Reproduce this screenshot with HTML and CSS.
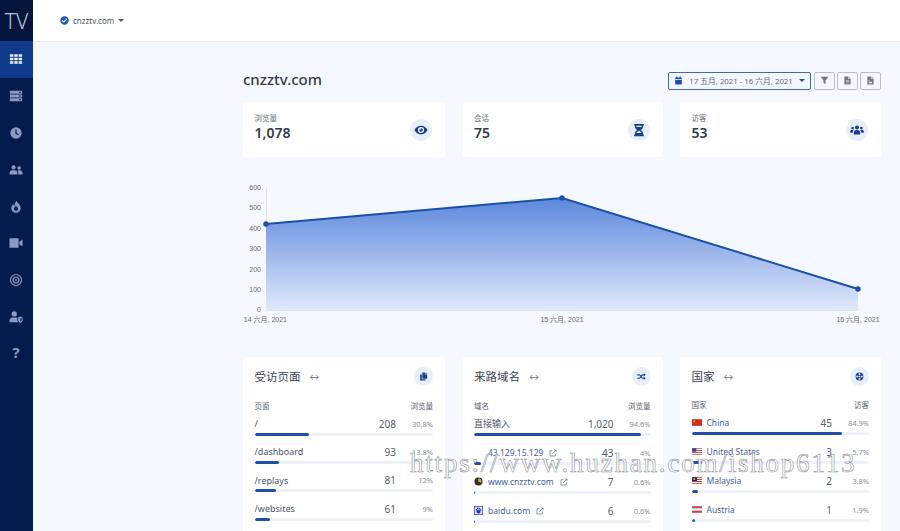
FILE: index.html
```html
<!DOCTYPE html>
<html lang="zh">
<head>
<meta charset="utf-8">
<title>cnzztv.com</title>
<link rel="stylesheet" href="styles.css">
</head>
<body>
<svg class="defs" width="0" height="0" aria-hidden="true">
  <symbol id="i-grid" viewBox="0 0 16 16"><path d="M1 2.500h4v3H1zM6 2.500h4v3H6zM11 2.500h4v3h-4zM1 6.500h4v3H1zM6 6.500h4v3H6zM11 6.500h4v3h-4zM1 10.500h4v3H1zM6 10.500h4v3H6zM11 10.500h4v3h-4z"/></symbol>
  <symbol id="i-server" viewBox="0 0 16 16"><path fill-rule="evenodd" d="M1 2h14v3.400H1zM1 6.300h14v3.400H1zM1 10.600h14V14H1zM11.500 3.200h2v1h-2zM11.500 7.500h2v1h-2zM11.500 11.800h2v1h-2z"/></symbol>
  <symbol id="i-clock" viewBox="0 0 16 16"><path fill-rule="evenodd" d="M8 1.500a6.500 6.500 0 1 1 0 13 6.500 6.500 0 0 1 0-13zM7.300 4v4.500l3 2.200.8-1-2.500-1.900V4z"/></symbol>
  <symbol id="i-users" viewBox="0 0 16 16"><circle cx="5.200" cy="5" r="2.400"/><circle cx="11.600" cy="5.600" r="2"/><path d="M.6 13.200v-1.600c0-2 1.600-3.400 3-3.400h3.200c1.400 0 2.800 1.400 2.800 3.400v1.600zM10.600 13.200v-2c0-1-.4-1.900-1-2.600.6-.3 1.200-.4 2-.4 2 0 3.800 1.200 3.800 3v2z"/></symbol>
  <symbol id="i-fire" viewBox="0 0 16 16"><path fill-rule="evenodd" d="M8.800.8c.5 2.700 4.500 4.200 4.500 8.500A5.300 5.300 0 0 1 8 14.800a5.300 5.300 0 0 1-5.300-5.500c0-2 1-3.500 2.300-4.600 0 1.300.5 2.100 1.400 2.500C6 5 7 2.600 8.800.8zM8 12.500a2.400 2.400 0 0 0 2.400-2.400C10.400 8.700 8.800 7.800 8 6.500 7.200 8 5.600 8.700 5.600 10.100A2.400 2.400 0 0 0 8 12.500z"/></symbol>
  <symbol id="i-video" viewBox="0 0 16 16"><path d="M.5 3.500A1 1 0 0 1 1.500 2.500h8.500a1 1 0 0 1 1 1v9a1 1 0 0 1-1 1H1.500a1 1 0 0 1-1-1zM11.800 6.500l3.700-2.500v8l-3.700-2.500z"/></symbol>
  <symbol id="i-target" viewBox="0 0 16 16"><path fill-rule="evenodd" d="M8 1a7 7 0 1 1 0 14A7 7 0 0 1 8 1zm0 1.400a5.600 5.600 0 1 0 0 11.200A5.600 5.600 0 0 0 8 2.400zM8 4a4 4 0 1 1 0 8 4 4 0 0 1 0-8zm0 1.400a2.600 2.600 0 1 0 0 5.200 2.600 2.600 0 0 0 0-5.200zM8 6.800a1.200 1.200 0 1 1 0 2.400 1.200 1.200 0 0 1 0-2.400z"/></symbol>
  <symbol id="i-usershield" viewBox="0 0 16 16"><circle cx="6" cy="4.500" r="3"/><path d="M.5 14v-1.800c0-2.200 1.800-3.700 3.500-3.700h4c.5 0 1 .1 1.400.3v2.200c0 1.200.5 2.200 1.300 3z"/><path fill-rule="evenodd" d="M13 7.500l2.700 1.100v2.400c0 1.900-1.300 3.200-2.700 3.800-1.400-.6-2.700-1.900-2.700-3.800V8.600zm0 1.300v4.500c.8-.5 1.500-1.300 1.500-2.400V9.400z"/></symbol>
  <symbol id="i-check" viewBox="0 0 16 16"><path fill-rule="evenodd" d="M8 .5a7.500 7.500 0 1 1 0 15A7.500 7.500 0 0 1 8 .5zM6.800 11.900l6-6-1.300-1.300-4.700 4.700-2.300-2.300-1.300 1.300z"/></symbol>
  <symbol id="i-eye" viewBox="0 0 16 16"><path fill-rule="evenodd" d="M8 3c3.300 0 6.100 2 7.500 5-1.400 3-4.200 5-7.500 5S1.900 11 .5 8C1.900 5 4.700 3 8 3zm0 1.500a3.500 3.500 0 1 0 0 7 3.500 3.500 0 0 0 0-7zM8 6a2 2 0 1 1-2 2c0-.3.100-.5.200-.8.200.3.500.4.800.4a1 1 0 0 0 1-1c0-.3-.200-.5-.4-.7.100 0 .3.100.4.100z"/></symbol>
  <symbol id="i-hourglass" viewBox="0 0 16 16"><path fill-rule="evenodd" d="M2.500 1h11v2h-1v1.500c0 1.700-1.200 2.700-2.600 3.500 1.400.8 2.600 1.800 2.600 3.500V13h1v2h-11v-2h1v-1.500c0-1.700 1.200-2.700 2.600-3.500C4.700 7.200 3.500 6.200 3.500 4.500V3h-1zM5 3v1.500h6V3zM8 8.900c-1.400.8-2.700 1.500-2.900 2.600h5.800C10.700 10.400 9.400 9.700 8 8.900z"/></symbol>
  <symbol id="i-crowd" viewBox="0 0 16 16"><circle cx="8" cy="5.200" r="2.300"/><circle cx="3" cy="5.700" r="1.500"/><circle cx="13" cy="5.700" r="1.500"/><path d="M4.300 13v-1.800c0-2 1.500-3.200 2.700-3.200h2c1.200 0 2.700 1.200 2.700 3.200V13zM.3 11V9.400c0-1 .8-1.700 1.600-1.700h1.600c.3 0 .6.100.8.300-.8.700-1.200 1.800-1.200 3zM15.700 11V9.400c0-1-.8-1.700-1.600-1.700h-1.600c-.3 0-.6.100-.8.300.8.700 1.200 1.800 1.200 3z"/></symbol>
  <symbol id="i-calendar" viewBox="0 0 16 16"><path d="M2 6.500h12v7a1.500 1.500 0 0 1-1.500 1.500h-9A1.500 1.500 0 0 1 2 13.500zM4 1h2v1.500h4V1h2v1.500h.5A1.500 1.500 0 0 1 14 4v1.500H2V4a1.500 1.500 0 0 1 1.500-1.500H4z"/></symbol>
  <symbol id="i-filter" viewBox="0 0 16 16"><path d="M1 1.500h14L9.800 8v6.500l-3.600-2.300V8z"/></symbol>
  <symbol id="i-file" viewBox="0 0 16 16"><path fill-rule="evenodd" d="M2.500 1H9v4.500h4.500V15h-11zM10 1l3.500 3.500H10zM5 7.500v1h6v-1zM5 9.800v1h6v-1zM5 12v1h6v-1z"/></symbol>
  <symbol id="i-fileimg" viewBox="0 0 16 16"><path fill-rule="evenodd" d="M2.500 1H9v4.500h4.500V15h-11zM10 1l3.500 3.500H10zM4.500 13l2.200-4 1.600 2 1-1.200 2.200 3.200zM5.500 6.500a1 1 0 1 0 0 2 1 1 0 0 0 0-2z"/></symbol>
  <symbol id="i-copy" viewBox="0 0 16 16"><path d="M6 1h5v3.500h3.500V12H6zM12 1l2.500 2.500H12zM2 4.500h3V13h6.500v2H2z"/></symbol>
  <symbol id="i-random" viewBox="0 0 16 16"><path d="M.5 4h3c1.300 0 2.100.6 2.800 1.500L9 9.300c.4.500.8.700 1.500.7h1.500V8l3.500 3-3.500 3v-2h-1.500c-1.300 0-2.200-.6-2.900-1.500L4.900 6.700C4.500 6.200 4.100 6 3.500 6h-3zM12 2l3.500 3L12 8V6h-1.500c-.5 0-.9.200-1.200.6L8.300 8 7 6.300l.8-1C8.500 4.500 9.400 4 10.500 4H12zM.5 10h3c.5 0 .9-.2 1.200-.6l1-1.400L7 9.700l-.8 1C5.500 11.500 4.600 12 3.500 12h-3z"/></symbol>
  <symbol id="i-globe" viewBox="0 0 16 16"><path fill-rule="evenodd" d="M8 1a7 7 0 1 1 0 14A7 7 0 0 1 8 1zM6.500 2.400v3.100h3V2.400zM6.500 6.700v2.600h3V6.700zM6.500 10.500v3.100h3v-3.100zM2.300 6.700c-.2.800-.2 1.800 0 2.600h3V6.700zM10.700 6.700v2.600h3c.2-.8.200-1.800 0-2.600z"/></symbol>
</svg>

<div class="app">
  <aside class="sidebar">
    <div class="logo">TV</div>
    <nav class="nav">
      <a class="nav-item is-active"><svg class="nav-icon"><use href="#i-grid"/></svg></a>
      <a class="nav-item"><svg class="nav-icon"><use href="#i-server"/></svg></a>
      <a class="nav-item"><svg class="nav-icon"><use href="#i-clock"/></svg></a>
      <a class="nav-item"><svg class="nav-icon"><use href="#i-users"/></svg></a>
      <a class="nav-item"><svg class="nav-icon"><use href="#i-fire"/></svg></a>
      <a class="nav-item"><svg class="nav-icon"><use href="#i-video"/></svg></a>
      <a class="nav-item"><svg class="nav-icon"><use href="#i-target"/></svg></a>
      <a class="nav-item"><svg class="nav-icon"><use href="#i-usershield"/></svg></a>
      <a class="nav-item nav-help">?</a>
    </nav>
  </aside>

  <div class="main">
    <header class="topbar">
      <svg class="site-check"><use href="#i-check"/></svg>
      <span class="site-name">cnzztv.com</span>
      <span class="caret caret-dark"></span>
    </header>

    <main class="content">
      <div class="title-row">
        <h1 class="page-title">cnzztv.com</h1>
        <div class="tools">
          <button class="date-btn">
            <svg class="btn-icon primary"><use href="#i-calendar"/></svg>
            <span class="date-text">17 五月, 2021 - 16 六月, 2021</span>
            <span class="caret caret-primary"></span>
          </button>
          <button class="tool-btn"><svg class="btn-icon"><use href="#i-filter"/></svg></button>
          <button class="tool-btn"><svg class="btn-icon"><use href="#i-file"/></svg></button>
          <button class="tool-btn"><svg class="btn-icon"><use href="#i-fileimg"/></svg></button>
        </div>
      </div>

      <section class="stats">
        <div class="stat">
          <div><div class="stat-label">浏览量</div><div class="stat-value">1,078</div></div>
          <span class="badge badge-lg"><svg><use href="#i-eye"/></svg></span>
        </div>
        <div class="stat">
          <div><div class="stat-label">会话</div><div class="stat-value">75</div></div>
          <span class="badge badge-lg"><svg><use href="#i-hourglass"/></svg></span>
        </div>
        <div class="stat">
          <div><div class="stat-label">访客</div><div class="stat-value">53</div></div>
          <span class="badge badge-lg"><svg><use href="#i-crowd"/></svg></span>
        </div>
      </section>

      <svg class="chart" viewBox="243 176 638 152">
        <defs>
          <linearGradient id="area" x1="0" y1="0" x2="0" y2="1">
            <stop offset="0" stop-color="#5c87dc"/>
            <stop offset="1" stop-color="#e0e9fb"/>
          </linearGradient>
        </defs>
        <path class="axis" d="M266.500 187V310M266 310.500H858"/>
        <path fill="url(#area)" d="M266 224L562 198L858 289V310H266Z"/>
        <path class="line" d="M266 224L562 198L858 289"/>
        <circle class="dot" cx="266" cy="224" r="2.700"/>
        <circle class="dot" cx="562" cy="198" r="2.700"/>
        <circle class="dot" cx="858" cy="289" r="2.700"/>
        <g class="tick-y">
          <text x="261" y="190">600</text>
          <text x="261" y="210">500</text>
          <text x="261" y="231">400</text>
          <text x="261" y="251">300</text>
          <text x="261" y="272">200</text>
          <text x="261" y="292">100</text>
          <text x="261" y="312">0</text>
        </g>
        <g class="tick-x">
          <text x="266" y="322">14 六月, 2021</text>
          <text x="562" y="322">15 六月, 2021</text>
          <text x="858" y="322">16 六月, 2021</text>
        </g>
      </svg>

      <section class="panels">
        <article class="panel">
          <div class="panel-head">
            <h2 class="panel-title">受访页面</h2><span class="arrows">↔</span>
            <span class="badge"><svg><use href="#i-copy"/></svg></span>
          </div>
          <div class="cols"><span>页面</span><span>浏览量</span></div>
          <div class="row"><div class="row-line"><span class="row-name">/</span><span class="count">208</span><span class="pct">30.8%</span></div><div class="meter"><div class="fill" style="width:30.300%"></div></div></div>
          <div class="row"><div class="row-line"><span class="row-name">/dashboard</span><span class="count">93</span><span class="pct">13.8%</span></div><div class="meter"><div class="fill" style="width:13.500%"></div></div></div>
          <div class="row"><div class="row-line"><span class="row-name">/replays</span><span class="count">81</span><span class="pct">12%</span></div><div class="meter"><div class="fill" style="width:12%"></div></div></div>
          <div class="row"><div class="row-line"><span class="row-name">/websites</span><span class="count">61</span><span class="pct">9%</span></div><div class="meter"><div class="fill" style="width:8.800%"></div></div></div>
        </article>

        <article class="panel">
          <div class="panel-head">
            <h2 class="panel-title">来路域名</h2><span class="arrows">↔</span>
            <span class="badge"><svg><use href="#i-random"/></svg></span>
          </div>
          <div class="cols"><span>域名</span><span>浏览量</span></div>
          <div class="row row-wide"><div class="row-line"><span class="row-name">直接输入</span><span class="count">1,020</span><span class="pct">94.6%</span></div><div class="meter"><div class="fill" style="width:94.600%"></div></div></div>
          <div class="row row-wide"><div class="row-line"><span class="row-name link link-indent">43.129.15.129<svg class="ext" viewBox="0 0 12 12"><path d="M5 2.500H1.500v8h8V7M7 1.500h3.500V5M10.500 1.500L5 7"/></svg></span><span class="count">43</span><span class="pct">4%</span></div><div class="meter"><div class="fill" style="width:4%"></div></div></div>
          <div class="row row-wide"><div class="row-line"><span class="row-name link"><svg class="fav" viewBox="0 0 10 10"><circle cx="5" cy="5" r="4.500" fill="#2b2f3a"/><path d="M5 1.500a3.500 3.500 0 0 1 3 5L4.500 5z" fill="#e2a23c"/></svg>www.cnzztv.com<svg class="ext" viewBox="0 0 12 12"><path d="M5 2.500H1.500v8h8V7M7 1.500h3.500V5M10.500 1.500L5 7"/></svg></span><span class="count">7</span><span class="pct">0.6%</span></div><div class="meter"><div class="fill" style="width:.6%"></div></div></div>
          <div class="row row-wide"><div class="row-line"><span class="row-name link"><svg class="fav" viewBox="0 0 10 10"><rect width="10" height="10" fill="#1b35c9"/><rect x=".8" y=".8" width="8.400" height="8.400" fill="#e8ecfb"/><ellipse cx="5" cy="6.300" rx="2.300" ry="2" fill="#1b35c9"/><circle cx="2.600" cy="4.300" r=".9" fill="#1b35c9"/><circle cx="4.100" cy="2.900" r=".9" fill="#1b35c9"/><circle cx="5.900" cy="2.900" r=".9" fill="#1b35c9"/><circle cx="7.400" cy="4.300" r=".9" fill="#1b35c9"/></svg>baidu.com<svg class="ext" viewBox="0 0 12 12"><path d="M5 2.500H1.500v8h8V7M7 1.500h3.500V5M10.500 1.500L5 7"/></svg></span><span class="count">6</span><span class="pct">0.6%</span></div><div class="meter"><div class="fill" style="width:.6%"></div></div></div>
        </article>

        <article class="panel">
          <div class="panel-head">
            <h2 class="panel-title">国家</h2><span class="arrows">↔</span>
            <span class="badge"><svg><use href="#i-globe"/></svg></span>
          </div>
          <div class="cols cols-tight"><span>国家</span><span>访客</span></div>
          <div class="row row-wide"><div class="row-line"><span class="row-name link"><svg class="flag" viewBox="0 0 18 12"><rect width="18" height="12" fill="#d8281c"/><circle cx="4" cy="4" r="1.600" fill="#f5c518"/></svg>China</span><span class="count">45</span><span class="pct">84.9%</span></div><div class="meter"><div class="fill" style="width:84.900%"></div></div></div>
          <div class="row row-wide"><div class="row-line"><span class="row-name link"><svg class="flag" viewBox="0 0 18 12"><rect width="18" height="12" fill="#fff"/><path d="M0 0h18v1.700H0zM0 3.400h18v1.700H0zM0 6.900h18v1.700H0zM0 10.300h18V12H0z" fill="#c8545c"/><rect width="8" height="6.500" fill="#3d4a80"/></svg>United States</span><span class="count">3</span><span class="pct">5.7%</span></div><div class="meter"><div class="fill" style="width:5.700%"></div></div></div>
          <div class="row row-wide"><div class="row-line"><span class="row-name link"><svg class="flag" viewBox="0 0 18 12"><rect width="18" height="12" fill="#fff"/><path d="M0 0h18v1.700H0zM0 3.400h18v1.700H0zM0 6.900h18v1.700H0zM0 10.300h18V12H0z" fill="#c9303c"/><rect width="9" height="6.900" fill="#1e2a66"/><circle cx="4" cy="3.400" r="1.800" fill="#f0c020"/></svg>Malaysia</span><span class="count">2</span><span class="pct">3.8%</span></div><div class="meter"><div class="fill" style="width:3.800%"></div></div></div>
          <div class="row row-wide"><div class="row-line"><span class="row-name link"><svg class="flag" viewBox="0 0 18 12"><rect width="18" height="12" fill="#c8485a"/><rect y="4" width="18" height="4" fill="#fff"/></svg>Austria</span><span class="count">1</span><span class="pct">1.9%</span></div><div class="meter"><div class="fill" style="width:1.900%"></div></div></div>
        </article>
      </section>
    </main>
  </div>

  <div class="watermark">https://www.huzhan.com/ishop6113</div>
</div>
</body>
</html>
```

FILE: styles.css
```css
* { box-sizing: border-box; }

html, body {
  margin: 0;
  height: 100%;
  overflow: hidden;
}

body {
  font-family: "Noto Sans", "Noto Sans CJK SC", sans-serif;
  color: #3c4250;
  background: #f5f8ff;
}

.defs { position: absolute; }

.app {
  position: relative;
  display: flex;
  height: 531px;
  overflow: hidden;
}

/* Sidebar */
.sidebar {
  flex: 0 0 33px;
  background: #041b4d;
}

.logo {
  height: 41px;
  display: flex;
  align-items: center;
  justify-content: center;
  font-size: 21px;
  font-weight: 300;
  color: #b9c3d6;
  background: #03153c;
}

.nav { display: flex; flex-direction: column; }

.nav-item {
  height: 36.800px;
  padding-right: 1px;
  display: flex;
  align-items: center;
  justify-content: center;
  color: #8a9ac0;
}

.nav-item.is-active {
  background: #0f3a8c;
  color: #e6eefc;
}

.nav-icon {
  width: 14px;
  height: 14px;
  fill: currentColor;
}

.nav-help {
  font-size: 15px;
  font-weight: 700;
  padding-bottom: 3px;
}

/* Top bar */
.main {
  flex: 1;
  min-width: 0;
  display: flex;
  flex-direction: column;
}

.topbar {
  flex: 0 0 41.500px;
  display: flex;
  align-items: center;
  padding-left: 27px;
  background: #fff;
  border-bottom: 1px solid #e6e9ee;
}

.site-check {
  width: 9px;
  height: 9px;
  fill: #1f5bb8;
  margin-right: 4px;
}

.site-name {
  font-size: 8px;
  color: #4c5566;
  margin-right: 4px;
}

.caret {
  display: inline-block;
  border-left: 3px solid transparent;
  border-right: 3px solid transparent;
  border-top: 3px solid #4f5775;
}

.caret-primary { border-top-color: #1f50a8; }

/* Content */
.content {
  flex: 1;
  padding: 30px 19px 0 210px;
}

.title-row {
  display: flex;
  align-items: center;
  justify-content: space-between;
  height: 18px;
}

.page-title {
  margin: 0 0 3px;
  font-size: 15px;
  font-weight: 500;
  color: #343a46;
}

.tools { display: flex; gap: 2px; }

button {
  font-family: inherit;
  background: #f3f7fd;
  padding: 0;
  display: flex;
  align-items: center;
  justify-content: center;
  height: 18px;
}

.date-btn {
  width: 143px;
  margin-right: 1px;
  gap: 6px;
  border: 1px solid #3f6aa8;
  border-radius: 2px;
}

.date-text {
  font-size: 7.800px;
  color: #5c6a80;
  white-space: nowrap;
}

.tool-btn {
  width: 21px;
  border: 1px solid #b6bfcb;
  border-radius: 2px;
}

.btn-icon {
  width: 9px;
  height: 9px;
  fill: #70757f;
}

.btn-icon.primary { fill: #1f50a8; }

.stats {
  margin-top: 12px;
  display: grid;
  grid-template-columns: 202px 200px 201px;
  justify-content: space-between;
}

.stat {
  height: 55px;
  padding: 11px 13px 0 11.500px;
  background: #fff;
  display: flex;
  justify-content: space-between;
  align-items: flex-start;
  border-radius: 2px;
}

.stat-label {
  font-size: 7.500px;
  line-height: 11px;
  color: #6b7280;
}

.stat-value {
  font-size: 14px;
  line-height: 17px;
  font-weight: 600;
  color: #343a46;
}

.badge {
  display: flex;
  align-items: center;
  justify-content: center;
  width: 19px;
  height: 19px;
  border-radius: 50%;
  background: #e9eff9;
  margin-left: auto;
}

.badge svg {
  width: 9px;
  height: 9px;
  fill: #17408f;
}

.badge-lg {
  width: 22px;
  height: 22px;
  margin-top: 6px;
}

.badge-lg svg {
  width: 14px;
  height: 14px;
}

.chart {
  display: block;
  width: 638px;
  height: 152px;
  margin-top: 19px;
}

.axis {
  fill: none;
  stroke: #dfe3ea;
  stroke-width: 1;
}

.line {
  fill: none;
  stroke: #1a50a8;
  stroke-width: 2;
}

.dot { fill: #1a50a8; }

.tick-y text {
  font-family: "Liberation Sans", "Noto Sans CJK SC", sans-serif;
  font-size: 7px;
  fill: #666;
  text-anchor: end;
}

.tick-x text {
  font-family: "Liberation Sans", "Noto Sans CJK SC", sans-serif;
  font-size: 7px;
  fill: #666;
  text-anchor: middle;
}

.tick-x text:first-child { text-anchor: end; transform: translateX(21px); }

/* Panels */
.panels {
  margin-top: 29px;
  display: grid;
  grid-template-columns: 202px 200px 201px;
  justify-content: space-between;
}

.panel {
  height: 200px;
  padding: 10px 12px 0 11.500px;
  background: #fff;
  border-radius: 2px;
}

.panel-head {
  display: flex;
  align-items: center;
  height: 19px;
}

.panel-title {
  margin: 0;
  font-size: 11.500px;
  font-weight: 400;
  color: #3c4250;
}

.arrows {
  margin-left: 9px;
  font-size: 10px;
  color: #6b7280;
}

.cols {
  margin-top: 15px;
  display: flex;
  justify-content: space-between;
  font-size: 7.500px;
  line-height: 11px;
  color: #5b6270;
}

.cols-tight { margin-top: 14px; }

.row { height: 28.400px; padding-top: 4px; }
.row-wide { height: 29px; }

.row-line {
  display: flex;
  align-items: center;
  height: 16px;
  font-size: 9px;
  color: #4c5566;
}

.row-name {
  flex: 1;
  display: flex;
  align-items: center;
  white-space: nowrap;
  min-width: 0;
}

.link { color: #3f5f9f; font-size: 8.500px; }
.link-indent { padding-left: 14px; }

.count {
  font-size: 10px;
  color: #555c69;
}

.pct {
  width: 37px;
  text-align: right;
  font-size: 7.500px;
  color: #8a909b;
}

.meter {
  margin-top: 1px;
  height: 3px;
  background: #eef1f5;
  border-radius: 2px;
  overflow: hidden;
}

.fill {
  height: 100%;
  background: #1f50a8;
  border-radius: 2px;
}

.ext {
  width: 8px;
  height: 8px;
  margin-left: 6px;
  fill: none;
  stroke: #5a6578;
  stroke-width: 1;
}

.fav {
  width: 9px;
  height: 9px;
  margin-right: 5px;
}

.flag {
  width: 10px;
  height: 7px;
  margin-right: 5px;
  flex: none;
}

/* Overlay */
.watermark {
  position: absolute;
  left: 410px;
  top: 449px;
  font-family: "Liberation Serif", serif;
  font-size: 27px;
  line-height: 28px;
  letter-spacing: 1.800px;
  white-space: nowrap;
  color: #fff;
  -webkit-text-stroke: 0.6px #8f959c;
}
```
